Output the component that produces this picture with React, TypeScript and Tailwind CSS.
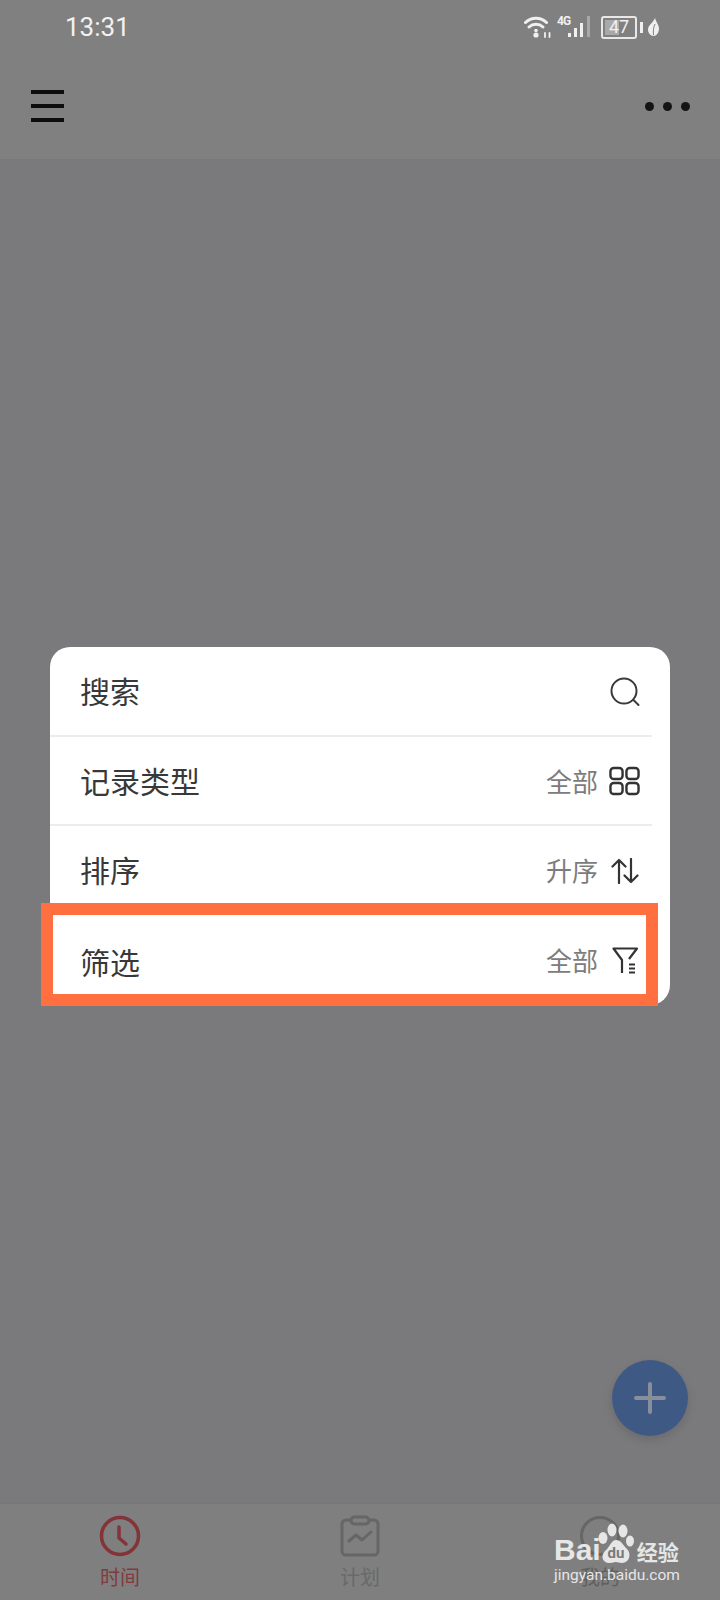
import React from "react";

const font = { fontFamily: '"Noto Sans CJK SC", "Noto Sans", sans-serif' };

function WifiIcon() {
  return (
    <svg width="28" height="22" viewBox="0 0 28 22" fill="none" stroke="#f0f0f0" strokeWidth="3" strokeLinecap="round">
      <path d="M1.500 6.500C7 .8 17 .8 22.500 6.500" />
      <path d="M5 11C9 7.400 15 7.400 19 11" />
      <circle cx="12" cy="14.500" r="1.800" fill="#f0f0f0" stroke="none" />
      <circle cx="12" cy="19" r="2.600" fill="#f0f0f0" stroke="none" />
      <path d="M21 17v4M25.500 17v4" strokeWidth="1.800" />
    </svg>
  );
}

function SignalIcon() {
  return (
    <svg width="24" height="22" viewBox="0 0 24 22" fill="#f0f0f0">
      <rect x="0" y="17" width="3" height="4" />
      <rect x="6" y="12" width="3" height="9" />
      <rect x="12" y="7" width="3" height="14" />
      <rect x="19" y="0" width="3" height="21" fill="#a8a8a8" />
    </svg>
  );
}

function LeafIcon() {
  return (
    <svg width="11" height="18" viewBox="0 0 11 18" fill="#f0f0f0">
      <path d="M7 0C8 4 11 7 11 10.500C11 14.500 8.500 18 5.500 18C2.500 18 0 15 0 11.500C0 7 5 5 7 0Z" />
      <path d="M5.500 17C5 13 5.500 9 7 6" stroke="#808080" strokeWidth="1" fill="none" />
    </svg>
  );
}

function StatusBar() {
  return (
    <div className="flex h-[54px] items-center pl-[65px] pr-[61px]">
      <span className="flex-1 text-[26px] leading-none text-[#f2f2f2]" style={{ fontFamily: "Roboto, sans-serif" }}>13:31</span>
      <WifiIcon />
      <span className="ml-[5px] -mt-[13px] w-[11px] text-[12px] font-bold leading-none tracking-[-1px] text-[#f0f0f0]" style={{ fontFamily: "Roboto, sans-serif" }}>4G</span>
      <SignalIcon />
      <div className="relative ml-[9px] flex h-[23px] w-[36px] items-center justify-center overflow-hidden rounded-[3px] border-2 border-[#e8e8e8]">
        <div className="absolute inset-y-[2px] left-[2px] w-[14px] bg-[#a9a9a9]" />
        <span className="relative text-[18px] leading-none text-[#f0f0f0]" style={{ fontFamily: "Roboto, sans-serif" }}>47</span>
      </div>
      <div className="ml-[3px] mr-[5px] h-[11px] w-[3px] bg-[#f0f0f0]" />
      <LeafIcon />
    </div>
  );
}

function Toolbar() {
  return (
    <div className="flex items-center justify-between pl-[31px] pr-[30px] pt-[36px]">
      <div className="flex w-[33px] flex-col gap-[10px]">
        <div className="h-[4px] bg-[#0d0d0d]" />
        <div className="h-[4px] bg-[#0d0d0d]" />
        <div className="h-[4px] bg-[#0d0d0d]" />
      </div>
      <div className="flex gap-[9px]">
        <div className="size-[9px] rounded-full bg-[#141414]" />
        <div className="size-[9px] rounded-full bg-[#141414]" />
        <div className="size-[9px] rounded-full bg-[#141414]" />
      </div>
    </div>
  );
}

function SearchIcon() {
  return (
    <svg width="30" height="30" viewBox="0 0 30 30" fill="none" stroke="#3a3a3a" strokeWidth="2" strokeLinecap="round">
      <circle cx="14" cy="14" r="12.500" />
      <path d="M23.500 23L28.500 28" />
    </svg>
  );
}

function GridIcon() {
  return (
    <svg width="32" height="30" viewBox="0 0 32 30" fill="none" stroke="#333" strokeWidth="2.500">
      <rect x="1.500" y="1.500" width="12.500" height="11.500" rx="3.500" />
      <rect x="18" y="1.500" width="12.500" height="11.500" rx="3.500" />
      <rect x="1.500" y="17" width="12.500" height="11.500" rx="3.500" />
      <rect x="18" y="17" width="12.500" height="11.500" rx="3.500" />
    </svg>
  );
}

function SortIcon() {
  return (
    <svg width="28" height="26" viewBox="0 0 28 26" fill="none" stroke="#333" strokeWidth="2.200" strokeLinecap="round" strokeLinejoin="round">
      <path d="M8 25V2M1.500 8.500L8 2l6.500 6.500" />
      <path d="M20 1v23M13.500 17.500L20 24l6.500-6.500" />
    </svg>
  );
}

function FilterIcon() {
  return (
    <svg width="26" height="27" viewBox="0 0 26 27" fill="none" stroke="#333" strokeWidth="2.200" strokeLinejoin="round">
      <path d="M17 12L25 1.500H1.500L10 13V26" />
      <path d="M17 17.500H23M17 21.500H23M17 25.500H23" strokeWidth="1.800" />
    </svg>
  );
}

function MenuRow({ label, value, icon, divider, last }: { label: string; value?: string; icon: React.ReactNode; divider?: boolean; last?: boolean }) {
  return (
    <div className={`flex h-[89.500px] items-center pl-[30px] pr-[30px] ${divider ? "relative" : ""}`}>
      <span className={`flex-1 text-[30px] leading-none text-[#383838] ${last ? "mt-[1px]" : "mb-[3px]"}`}>{label}</span>
      {value && <span className="mb-[1px] text-[26px] leading-none text-[#7c7c7c]">{value}</span>}
      <span className="ml-[11px] flex w-[31px] justify-center">{icon}</span>
      {divider && <div className="absolute bottom-0 left-0 right-[18px] h-[2px] bg-[#ececec]" />}
    </div>
  );
}

function PlanIcon() {
  return (
    <svg width="40" height="42" viewBox="0 0 40 42" fill="none" stroke="#666" strokeWidth="3" strokeLinejoin="round" strokeLinecap="round">
      <path d="M11 5H6a4 4 0 0 0-4 4v27a4 4 0 0 0 4 4h28a4 4 0 0 0 4-4V9a4 4 0 0 0-4-4h-5" />
      <rect x="11" y="2" width="18" height="7" rx="3.500" />
      <path d="M9 26l7-6 6 5 9-8" />
    </svg>
  );
}

function ClockIcon() {
  return (
    <svg width="42" height="42" viewBox="0 0 42 42" fill="none" stroke="#843338" strokeWidth="3.500" strokeLinecap="round" strokeLinejoin="round">
      <circle cx="21" cy="21" r="18.500" />
      <path d="M20 12V23L27 29" />
    </svg>
  );
}

function NavItem({ icon, label, color }: { icon: React.ReactNode; label: string; color: string }) {
  return (
    <div className="flex w-[240px] flex-col items-center">
      <div className="flex h-[42px] items-center">{icon}</div>
      <span className={`mt-[10px] text-[20px] leading-none ${color}`}>{label}</span>
    </div>
  );
}

function Watermark() {
  return (
    <div className="absolute left-[554px] top-[1523px] w-[130px] text-[#e6e6e6]" style={{ fontFamily: "Roboto, sans-serif" }}>
      <div className="flex h-[40px] items-end whitespace-nowrap">
        <span className="text-[30px] font-bold leading-[26px]" style={{ fontFamily: '"Liberation Sans", sans-serif' }}>Bai</span>
        <svg width="36" height="40" viewBox="0 0 36 40" fill="#e6e6e6" className="ml-[-3px] flex-none">
          <ellipse cx="5" cy="15" rx="4.500" ry="6" />
          <ellipse cx="14" cy="7" rx="4.500" ry="6.500" />
          <ellipse cx="25" cy="8" rx="4.500" ry="6.500" />
          <ellipse cx="32" cy="18" rx="4" ry="5.500" />
          <path d="M18 17C23 17 25 22 29 26C34 31 31 40 24 40C21 40 20 39 18 39C16 39 15 40 11 40C5 40 2 33 7 28C12 24 13 17 18 17Z" />
          <text x="18" y="35" textAnchor="middle" fontSize="15" fontWeight="700" fill="#7a7a7a">du</text>
        </svg>
        <span className="ml-[3px] text-[21px] font-bold leading-[24px]" style={font}>经验</span>
      </div>
      <div className="mt-[3px] text-[15.500px] leading-[18px] whitespace-nowrap">jingyan.baidu.com</div>
    </div>
  );
}

export default function App() {
  return (
    <div className="relative flex h-[1600px] w-[720px] flex-col overflow-hidden bg-[#7a7a7c]" style={font}>
      <header className="h-[159px] bg-[#808080]">
        <StatusBar />
        <Toolbar />
      </header>

      {/* dialog card */}
      <main className="flex-1 pl-[50px] pt-[488px]">
        <div className="w-[620px] overflow-hidden rounded-[20px] bg-white">
          <MenuRow label="搜索" icon={<SearchIcon />} divider />
          <MenuRow label="记录类型" value="全部" icon={<GridIcon />} divider />
          <MenuRow label="排序" value="升序" icon={<SortIcon />} />
          <MenuRow label="筛选" value="全部" icon={<FilterIcon />} last />
        </div>
      </main>

      <nav className="flex h-[97px] items-start border-t border-[#777779] bg-[#7f7f7f] pt-[11px]">
        <NavItem icon={<ClockIcon />} label="时间" color="text-[#7f3b3e]" />
        <NavItem icon={<PlanIcon />} label="计划" color="text-[#696969]" />
        <NavItem
          icon={<div className="size-[40px] rounded-full border-[3px] border-[#666666]" />}
          label="我的"
          color="text-[#5f5f5f]"
        />
      </nav>

      {/* add button */}
      <div className="absolute left-[612px] top-[1360px] flex size-[76px] items-center justify-center rounded-full bg-[#3f5985] shadow-[0_4px_10px_rgba(0,0,0,0.12)]">
        <svg width="32" height="32" viewBox="0 0 32 32" stroke="#888e9a" strokeWidth="4" strokeLinecap="round">
          <path d="M2 16H30M16 2V30" />
        </svg>
      </div>

      {/* orange annotation box */}
      <div className="absolute left-[41px] top-[903px] h-[103px] w-[617px] border-[12px] border-[#ff6f40]" />

      <Watermark />
    </div>
  );
}
